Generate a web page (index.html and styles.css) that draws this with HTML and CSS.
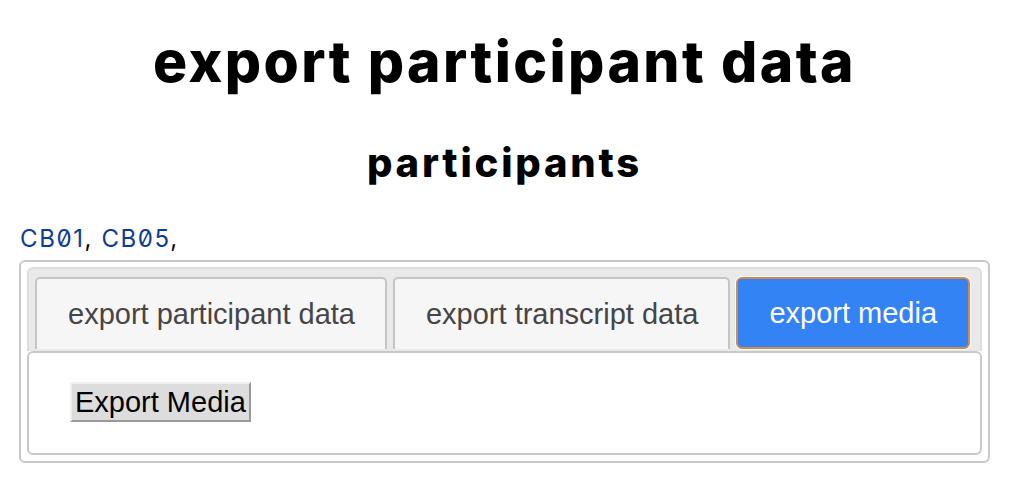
FILE: index.html
```html
<!DOCTYPE html>
<html lang="en">
<head>
<meta charset="utf-8">
<title>export participant data</title>
<link rel="stylesheet" href="styles.css">
</head>
<body>
<h1 class="title">export participant data</h1>
<h2 class="subtitle">participants</h2>
<p class="plist"><a class="plink" href="#">CB01</a>, <a class="plink" href="#">CB05</a>,</p>
<div class="tabs">
  <ul class="tabnav">
    <li class="tab">export participant data</li>
    <li class="tab">export transcript data</li>
    <li class="tab tab-active">export media</li>
  </ul>
  <div class="panel">
    <button class="btn" type="button">Export Media</button>
  </div>
</div>
</body>
</html>
```
FILE: styles.css
```css
html, body {
  margin: 0;
  padding: 0;
  background: #fff;
}
body {
  padding: 0 22px 0 19px;
  font-family: "Liberation Sans", Arial, sans-serif;
}
.title {
  margin: 0;
  padding-top: 26px;
  text-align: center;
  font-family: Inter, "Noto Sans", sans-serif;
  font-weight: 800;
  font-size: 57px;
  letter-spacing: 2.4px;
  line-height: 72px;
  color: #000;
}
.subtitle {
  margin: 0;
  padding-top: 42px;
  text-align: center;
  font-family: Inter, "Noto Sans", sans-serif;
  font-weight: 800;
  font-size: 40px;
  letter-spacing: 2.8px;
  line-height: 46px;
  color: #000;
}
.plist {
  margin: 0;
  padding: 39px 0 7px 1px;
  font-family: Inter, "Noto Sans", sans-serif;
  font-feature-settings: "zero" 1;
  font-size: 24px;
  letter-spacing: 1.6px;
  line-height: 28px;
  color: #000;
}
.plink {
  color: #0d3c94;
  text-decoration: none;
}
.tabs {
  border: 2px solid #c8c8c8;
  border-radius: 6px;
  padding: 5px 6px 6px 6px;
}
.tabnav {
  list-style: none;
  margin: 0;
  padding: 8px 8px 0 6px;
  display: flex;
  gap: 6px;
  background: #e9e9e9;
  border: 2px solid #dddddd;
  border-bottom: none;
  border-radius: 6px 6px 0 0;
}
.tab {
  height: 70px;
  padding: 0 30px 0 31px;
  display: flex;
  align-items: center;
  font-size: 29px;
  color: #454545;
  background: #f6f6f6;
  border: 2px solid #c5c5c5;
  border-bottom: none;
  border-radius: 5px 5px 0 0;
  white-space: nowrap;
}
.tab-active {
  background: #3483f5;
  color: #fff;
  border: 2px solid #cf8a4f;
  border-radius: 6px;
  box-shadow: 0 0 0 1px #fff;
  height: 68px;
  padding: 0 31px;
  margin-bottom: 2px;
}
.panel {
  background: #fff;
  border: 2px solid #c8c8c8;
  border-radius: 6px;
  padding: 29px 20px 31px 41px;
}
.btn {
  font-family: "Liberation Sans", Arial, sans-serif;
  font-size: 29px;
  line-height: 34px;
  color: #000;
  background: #dddddd;
  border: 2px solid #b5b5b5;
  border-color: #efefef #999999 #999999 #efefef;
  padding: 1px 3px;
  margin: 0;
  border-radius: 0;
}
```
